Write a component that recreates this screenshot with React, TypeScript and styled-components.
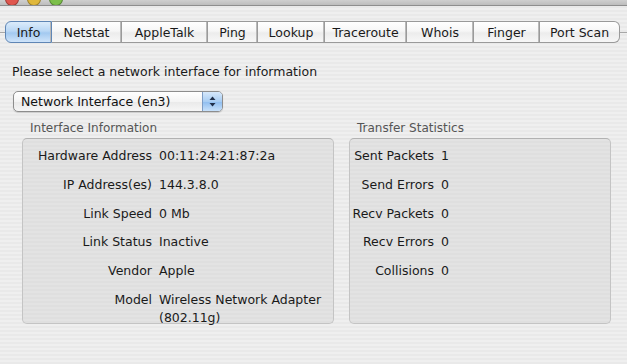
import React from "react";
import styled, { createGlobalStyle } from "styled-components";

const GlobalStyle = createGlobalStyle`
  html, body {
    margin: 0;
    padding: 0;
  }
  body {
    font-family: "DejaVu Sans", "Liberation Sans", sans-serif;
    font-size: 12px;
    color: #111;
  }
`;

const Window = styled.div`
  width: 627px;
  height: 364px;
  overflow: hidden;
  background: repeating-linear-gradient(
    to bottom,
    #efefef 0px,
    #efefef 2px,
    #e9e9e9 2px,
    #e9e9e9 4px
  );
  display: flex;
  flex-direction: column;
`;

const TitleStrip = styled.div`
  height: 5px;
  overflow: hidden;
  background: linear-gradient(#cfcfcf, #bdbdbd);
  border-bottom: 1px solid #8e8e8e;
  display: flex;
  align-items: flex-end;
  gap: 8px;
  padding-left: 5px;
`;

const Light = styled.div<{ $color: string }>`
  flex: none;
  width: 12px;
  height: 12px;
  border-radius: 50%;
  margin-bottom: -1px;
  background: ${(p) => p.$color};
  border: 1px solid rgba(0, 0, 0, 0.3);
`;

const TabBar = styled.div`
  display: flex;
  align-items: center;
  margin-top: 15px;
  height: 22px;
`;

const TabLine = styled.div<{ $w: number }>`
  width: ${(p) => p.$w}px;
  height: 1px;
  background: #a7a7a7;
  flex: none;
`;

const Tab = styled.div<{ $w: number; $active?: boolean; $first?: boolean; $last?: boolean }>`
  flex: none;
  box-sizing: border-box;
  width: ${(p) => p.$w}px;
  height: 22px;
  display: flex;
  align-items: center;
  justify-content: center;
  font-size: 12.5px;
  color: #1a1a1a;
  border: 1px solid ${(p) => (p.$active ? "#5f86b5" : "#9a9a9a")};
  border-left: ${(p) => (p.$first ? "" : "none")};
  border-radius: ${(p) => (p.$first ? "6px 0 0 6px" : p.$last ? "0 6px 6px 0" : "0")};
  background: ${(p) =>
    p.$active
      ? "linear-gradient(#dcecfb 0%, #b9d7f5 45%, #a3c9f0 55%, #cfe4fa 100%)"
      : "linear-gradient(#ffffff 0%, #f6f6f6 45%, #ececec 55%, #f7f7f7 100%)"};
  box-shadow: ${(p) => (p.$last ? "none" : "inset -1px 0 0 #b9b9b9")};
`;

const Body = styled.div`
  padding: 21px 0 0 12px;
  display: flex;
  flex-direction: column;
`;

const Prompt = styled.div`
  font-size: 12.5px;
  line-height: 16px;
  color: #1a1a1a;
`;

const Popup = styled.div`
  margin-top: 11px;
  margin-left: 1px;
  width: 210px;
  height: 21px;
  box-sizing: border-box;
  border: 1px solid #8d8d8d;
  border-radius: 5px;
  display: flex;
  overflow: hidden;
  background: linear-gradient(#ffffff 0%, #f4f4f4 50%, #e9e9e9 51%, #f6f6f6 100%);
  box-shadow: 0 1px 1px rgba(0, 0, 0, 0.15);
`;

const PopupLabel = styled.div`
  flex: 1;
  padding-left: 7px;
  display: flex;
  align-items: center;
  font-size: 12.5px;
  color: #111;
`;

const PopupArrows = styled.div`
  width: 19px;
  flex: none;
  border-left: 1px solid #7d9cc4;
  background: linear-gradient(#d6e8fb 0%, #a8cdf3 50%, #8dbcef 51%, #c8e1fa 100%);
  display: flex;
  align-items: center;
  justify-content: center;
`;

const Panels = styled.div`
  display: flex;
  gap: 15px;
  margin-top: 8px;
  margin-left: 10px;
`;

const Group = styled.div<{ $w: number }>`
  width: ${(p) => p.$w}px;
  display: flex;
  flex-direction: column;
`;

const GroupTitle = styled.div`
  padding-left: 8px;
  font-size: 12px;
  line-height: 16px;
  color: #555;
  margin-bottom: 2px;
`;

const Box = styled.div`
  box-sizing: border-box;
  height: 186px;
  border: 1px solid #c4c4c4;
  border-top-color: #b2b2b2;
  border-radius: 5px;
  background: repeating-linear-gradient(
    to bottom,
    #e3e3e3 0px,
    #e3e3e3 2px,
    #dfdfdf 2px,
    #dfdfdf 4px
  );
  padding-top: 8px;
`;

const Rows = styled.div<{ $label: number }>`
  display: grid;
  grid-template-columns: ${(p) => p.$label}px 1fr;
  column-gap: 7px;
  row-gap: 10.8px;
  align-items: start;
`;

const Label = styled.div`
  text-align: right;
  font-size: 12.5px;
  line-height: 18px;
  color: #1a1a1a;
  white-space: nowrap;
`;

const Value = styled.div`
  font-size: 12.5px;
  line-height: 18px;
  color: #1a1a1a;
  white-space: pre-line;
`;

const tabs = [
  { name: "Info", w: 47 },
  { name: "Netstat", w: 70 },
  { name: "AppleTalk", w: 86 },
  { name: "Ping", w: 50 },
  { name: "Lookup", w: 67 },
  { name: "Traceroute", w: 82 },
  { name: "Whois", w: 67 },
  { name: "Finger", w: 66 },
  { name: "Port Scan", w: 80 },
];

const info = [
  ["Hardware Address", "00:11:24:21:87:2a"],
  ["IP Address(es)", "144.3.8.0"],
  ["Link Speed", "0 Mb"],
  ["Link Status", "Inactive"],
  ["Vendor", "Apple"],
  ["Model", "Wireless Network Adapter\n(802.11g)"],
];

const stats = [
  ["Sent Packets", "1"],
  ["Send Errors", "0"],
  ["Recv Packets", "0"],
  ["Recv Errors", "0"],
  ["Collisions", "0"],
];

export default function App() {
  return (
    <Window>
      <GlobalStyle />
      <TitleStrip>
        <Light $color="#e0574f" />
        <Light $color="#e0b83c" />
        <Light $color="#7cbf4a" />
      </TitleStrip>
      <TabBar>
        <TabLine $w={5} />
        {tabs.map((t, i) => (
          <Tab
            key={t.name}
            $w={t.w}
            $active={i === 0}
            $first={i === 0}
            $last={i === tabs.length - 1}
          >
            {t.name}
          </Tab>
        ))}
        <TabLine $w={7} />
      </TabBar>
      <Body>
        <Prompt>Please select a network interface for information</Prompt>
        <Popup>
          <PopupLabel>Network Interface (en3)</PopupLabel>
          <PopupArrows>
            <svg width="7" height="11" viewBox="0 0 7 11">
              <path d="M3.5 0.5 L6.5 4 L0.5 4 Z" fill="#1f2f4a" />
              <path d="M3.5 10.5 L6.5 7 L0.5 7 Z" fill="#1f2f4a" />
            </svg>
          </PopupArrows>
        </Popup>
        <Panels>
          <Group $w={312}>
            <GroupTitle>Interface Information</GroupTitle>
            <Box>
              <Rows $label={129}>
                {info.map(([k, v]) => (
                  <React.Fragment key={k}>
                    <Label>{k}</Label>
                    <Value>{v}</Value>
                  </React.Fragment>
                ))}
              </Rows>
            </Box>
          </Group>
          <Group $w={262}>
            <GroupTitle>Transfer Statistics</GroupTitle>
            <Box>
              <Rows $label={84}>
                {stats.map(([k, v]) => (
                  <React.Fragment key={k}>
                    <Label>{k}</Label>
                    <Value>{v}</Value>
                  </React.Fragment>
                ))}
              </Rows>
            </Box>
          </Group>
        </Panels>
      </Body>
    </Window>
  );
}
